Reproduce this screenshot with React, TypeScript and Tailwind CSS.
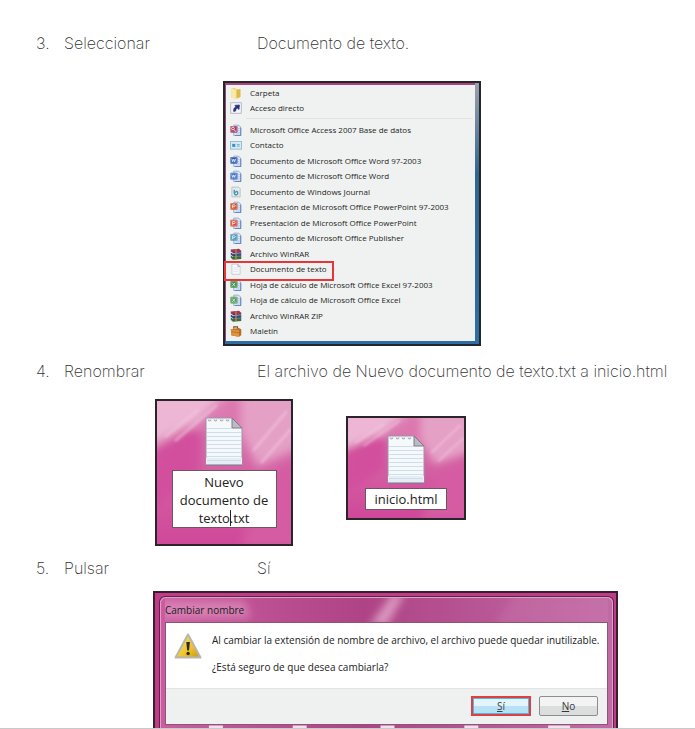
import type { ReactNode } from "react";

type IconName =
  | "folder" | "shortcut" | "access" | "contact" | "word" | "wordNew" | "journal"
  | "ppt" | "pptNew" | "publisher" | "rar" | "text" | "excel" | "excelNew" | "briefcase";

function OfficeIcon({ color, shift = 0 }: { color: string; shift?: number }) {
  return (
    <>
      <path d="M5 1.5h6.500l2.500 2.500v11.500h-9z" fill="#dbe7fa" stroke="#7f9ccf" />
      <path d="M10.500 6h2.500M10.500 8.500h2.500M10.500 11h2.500M8 13.300h5" stroke="#a9c0e6" />
      <path d="M14.500 5v10.500h-8" fill="none" stroke="#4d6fae" />
      <rect x="0.500" y={2.5 + shift} width="9.500" height="9" rx="1" fill={color} />
      <rect x="1.500" y={3.5 + shift} width="7.500" height="7" fill="none" stroke="#ffffff" strokeOpacity=".3" />
    </>
  );
}

function MenuIcon({ name }: { name: IconName }) {
  const art: Record<IconName, ReactNode> = {
    folder: (
      <>
        <path d="M2 2l5-1 1 1.500h5.500V14L8 15.500 2 14z" fill="#edd271" />
        <path d="M2 2l6 2v11.500L2 14z" fill="#f8e9a4" />
        <path d="M9 4l5-1v10l-5 2z" fill="#dfb84b" />
      </>
    ),
    shortcut: (
      <>
        <rect x="1" y="1" width="14" height="14" fill="#f3f5fa" stroke="#a3a8b5" />
        <path d="M5 12.500c-.500-4 1-5.500 3-6L6.500 4.500l6-.500-.500 6-1.800-1.700C8 8.500 7.500 10 7.500 12z" fill="#27307f" stroke="#27307f" />
      </>
    ),
    access: (
      <>
        <OfficeIcon color="#a5395c" />
        <circle cx="4" cy="6" r="1.800" fill="none" stroke="#fff" />
        <path d="M5 7.500l3 2.500" stroke="#fff" />
      </>
    ),
    contact: (
      <>
        <rect x="0.500" y="3.500" width="15" height="10" fill="#d5eaf5" stroke="#7fb0cb" />
        <rect x="3" y="6.500" width="4" height="4" fill="#3f8fb5" />
        <path d="M9 7.500h4M9 9.500h4" stroke="#5b9fc0" />
      </>
    ),
    word: (
      <>
        <OfficeIcon color="#2d58ad" />
        <path d="M2.500 5l1.200 4L5 5.500 6.300 9l1.200-4" fill="none" stroke="#fff" />
      </>
    ),
    wordNew: (
      <>
        <OfficeIcon color="#3465bd" shift={1} />
        <path d="M2.500 6l1.200 4L5 6.500 6.300 10l1.200-4" fill="none" stroke="#fff" />
      </>
    ),
    journal: (
      <>
        <path d="M2.500 1.500h9l2 2v11h-11z" fill="#e6ebed" stroke="#a9b4b9" />
        <path d="M6 5c-1 4 0 7 2 7s3-2 2-4-3 0-2 1" fill="none" stroke="#3e94b0" strokeWidth="1.800" />
      </>
    ),
    ppt: (
      <>
        <OfficeIcon color="#c9502c" />
        <path d="M3.500 9.500V5h2.200a1.300 1.300 0 010 2.700H3.500" fill="none" stroke="#fff" />
      </>
    ),
    pptNew: (
      <>
        <OfficeIcon color="#d44a38" shift={1} />
        <path d="M3.500 10.500V6h2.200a1.300 1.300 0 010 2.700H3.500" fill="none" stroke="#fff" />
      </>
    ),
    publisher: (
      <>
        <OfficeIcon color="#4c93b0" />
        <path d="M3.500 9.500V5h2.200a1.300 1.300 0 010 2.700H3.500" fill="none" stroke="#fff" />
      </>
    ),
    rar: (
      <>
        <path d="M1 2l11-1 3 2.500v2L4 6.500 1 4.500z" fill="#a0335c" />
        <path d="M1 6l3 2 11-1v3L4 11 1 9z" fill="#2c4c97" />
        <path d="M1 10l3 2 11-1v3.500L4 15.500 1 13z" fill="#35703c" />
        <path d="M4 6.500h11M4 11l11-.500" stroke="#1e1f30" />
        <path d="M8 1.500v13.500" stroke="#b58b45" strokeWidth="1.800" />
      </>
    ),
    text: (
      <>
        <path d="M2.500 1.500h8l3 3v10.500h-11z" fill="#f8fafc" stroke="#bbc1c7" />
        <path d="M10.500 1.500v3h3" fill="none" stroke="#9ba4ac" />
        <path d="M4.500 6.500h7M4.500 9h7M4.500 11.500h7" stroke="#d9e1e9" />
      </>
    ),
    excel: (
      <>
        <OfficeIcon color="#3f8b45" />
        <path d="M3 5l4 4.500M7 5L3 9.500" stroke="#fff" />
      </>
    ),
    excelNew: (
      <>
        <OfficeIcon color="#4b9a4e" shift={1} />
        <path d="M3 6l4 4.500M7 6l-4 4.500" stroke="#fff" />
      </>
    ),
    briefcase: (
      <>
        <path d="M5 5V2.500h5V5" fill="none" stroke="#7d4c1d" strokeWidth="1.500" />
        <path d="M1 5.500l11-1.500 3 1.500v8L12 15.500 2 14z" fill="#b96f26" />
        <path d="M1 5.500l11 1.500v8.500L2 14z" fill="#dc9440" />
        <path d="M1.500 9l10.500 1.200 3-1.200" fill="none" stroke="#b06a24" />
      </>
    ),
  };
  return (
    <svg viewBox="0 0 16 16" className="size-3 shrink-0" aria-hidden="true">
      {art[name]}
    </svg>
  );
}

const topItems: [IconName, string][] = [
  ["folder", "Carpeta"],
  ["shortcut", "Acceso directo"],
];

const items: [IconName, string][] = [
  ["access", "Microsoft Office Access 2007 Base de datos"],
  ["contact", "Contacto"],
  ["word", "Documento de Microsoft Office Word 97-2003"],
  ["wordNew", "Documento de Microsoft Office Word"],
  ["journal", "Documento de Windows Journal"],
  ["ppt", "Presentación de Microsoft Office PowerPoint 97-2003"],
  ["pptNew", "Presentación de Microsoft Office PowerPoint"],
  ["publisher", "Documento de Microsoft Office Publisher"],
  ["rar", "Archivo WinRAR"],
  ["text", "Documento de texto"],
  ["excel", "Hoja de cálculo de Microsoft Office Excel 97-2003"],
  ["excelNew", "Hoja de cálculo de Microsoft Office Excel"],
  ["rar", "Archivo WinRAR ZIP"],
  ["briefcase", "Maletín"],
];

function MenuRow({ icon, label }: { icon: IconName; label: string }) {
  return (
    <li className="relative min-h-0">
      <button type="button" className="flex h-full w-full items-center gap-2 pl-0.5 text-left whitespace-nowrap">
        <MenuIcon name={icon} />
        {label}
      </button>
      {icon === "text" && (
        <span className="pointer-events-none absolute -top-px -left-1 z-10 h-5 w-[110px] border-2 border-[#e8353a]" />
      )}
    </li>
  );
}

function ContextMenu() {
  return (
    <div className="ml-[223px] w-[258px] border-2 border-[#252629] bg-linear-to-b from-[#9aa0ad] via-[#2f6690] via-35% to-[#2d6fa5] pr-1 pb-[3px]">
      <div className="border-t-2 border-l border-t-[#a8447f] border-l-[#8d4a78] bg-[#f0f2f2] pb-0.5 font-['Open_Sans',sans-serif] text-[8px] leading-3 text-[#1c1e20]">
        <ul className="grid h-[31px] auto-rows-fr pl-0.5">
          {topItems.map(([icon, label]) => (
            <MenuRow key={label} icon={icon} label={label} />
          ))}
        </ul>
        <hr className="mt-0.5 mr-0.5 mb-[3px] ml-5 border-[#e0e3e3]" />
        <ul className="grid h-[217px] auto-rows-fr pl-0.5">
          {items.map(([icon, label]) => (
            <MenuRow key={label} icon={icon} label={label} />
          ))}
        </ul>
      </div>
    </div>
  );
}

function NotepadIcon() {
  return (
    <svg viewBox="0 0 38 50" className="h-[50px] w-[38px]" aria-hidden="true">
      <path d="M1 2h26l10 10v37H1z" fill="#f5f9fc" stroke="#9a95a5" />
      <path d="M1 42h36v7H1z" fill="#e6edf4" />
      <path
        d="M2 12.500h25M2 16.500h34M2 20.500h34M2 24.500h34M2 28.500h34M2 32.500h34M2 36.500h34M2 40.500h34M2 44.500h34"
        stroke="#cfdfea"
      />
      <path d="M27 2v10h10z" fill="#b9bcc4" stroke="#7e7b89" />
      <path d="M3 3.500a1.500 1.500 0 103 0M9 3.500a1.500 1.500 0 103 0M15 3.500a1.500 1.500 0 103 0M21 3.500a1.500 1.500 0 103 0" fill="#d6d2dc" stroke="#9a95a5" strokeWidth=".8" />
      <path d="M1 49h36" stroke="#77708a" />
    </svg>
  );
}

function DesktopTile({ className, children }: { className: string; children: ReactNode }) {
  return (
    <div className={"relative isolate flex flex-col items-center overflow-hidden border-2 border-[#2b242a] " + className}>
      <svg viewBox="0 0 134 143" preserveAspectRatio="none" className="absolute inset-0 -z-10 size-full" aria-hidden="true">
        <defs>
          <linearGradient id="petal" x1="0" y1="0" x2="0" y2="1">
            <stop offset="0" stopColor="#dd80b4" />
            <stop offset=".5" stopColor="#d461a3" />
            <stop offset="1" stopColor="#d0489a" />
          </linearGradient>
          <filter id="soft" x="-30%" y="-30%" width="160%" height="160%">
            <feGaussianBlur stdDeviation="5" />
          </filter>
          <filter id="streak" x="-30%" y="-30%" width="160%" height="160%">
            <feGaussianBlur stdDeviation="1.2" />
          </filter>
        </defs>
        <rect width="134" height="143" fill="url(#petal)" />
        <g filter="url(#soft)">
          <path d="M-10 -10h80L40 22-10 46z" fill="#ecb6d4" />
          <path d="M84 -10h60v56L100 66 84 30z" fill="#e5a0c6" />
          <path d="M72 0h12l-2 40-10-10z" fill="#dc74ae" />
          <path d="M-5 52l35-26 16 8-4 40L-5 110z" fill="#d2509d" />
          <path d="M140 56l-36 30-20 60h60z" fill="#d55ca3" />
        </g>
        <path
          d="M8 36L42 8M18 40L60 4M96 50l34-40M104 62l30-34"
          stroke="#f4cbe0"
          strokeOpacity=".45"
          strokeWidth="3"
          filter="url(#streak)"
        />
      </svg>
      {children}
    </div>
  );
}

function RenameDialog() {
  return (
    <div className="relative isolate ml-[153px] w-[465px] overflow-hidden border-2 border-b-0 border-[#36202f] bg-[#c03c89] pt-[3px] pr-0.5 pl-1">
      <section
        aria-label="Cambiar nombre"
        className="rounded-t-md border border-b-0 border-[#5e2549] bg-linear-to-r from-[#cc5ca0] via-[#ae4385] via-45% to-[#c36aa6] font-['Open_Sans',sans-serif] text-[10px] text-[#222]"
      >
        <div className="rounded-t-md border border-b-0 border-[#dda0c7] px-1">
          <header className="relative flex h-6 items-center overflow-hidden">
            <svg viewBox="0 0 444 24" preserveAspectRatio="none" className="absolute inset-0 size-full" aria-hidden="true">
              <defs>
                <filter id="glass" x="-10%" y="-50%" width="120%" height="200%">
                  <feGaussianBlur stdDeviation="4" />
                </filter>
              </defs>
              <g filter="url(#glass)">
                <path d="M205 28L228 -4h12L222 28z" fill="#e9b4d4" fillOpacity=".75" />
                <path d="M-6 3h86L86 20H-6z" fill="#e29cc5" fillOpacity=".6" />
                <path d="M330 28L350 -4h100v32z" fill="#cf83b4" fillOpacity=".25" />
              </g>
            </svg>
            <h2 className="relative">Cambiar nombre</h2>
          </header>
          <div className="border border-[#89567a]">
            <div className="flex h-[65px] gap-[10px] bg-white pt-2.5 pl-2">
              <svg viewBox="0 0 28 26" className="h-[26px] w-7 shrink-0" aria-hidden="true">
                <defs>
                  <linearGradient id="warn" x1="0" y1="0" x2="1" y2="1">
                    <stop offset="0" stopColor="#fae66a" />
                    <stop offset=".6" stopColor="#efc429" />
                    <stop offset="1" stopColor="#c79612" />
                  </linearGradient>
                </defs>
                <path d="M14 1.500L26.500 24.500h-25z" fill="url(#warn)" stroke="#b7b6b0" strokeWidth="2" strokeLinejoin="round" />
                <path d="M12.300 9h3.600l-.9 8.500h-1.800z" fill="#2b2a25" />
                <circle cx="14.100" cy="20.500" r="1.700" fill="#2b2a25" />
              </svg>
              <div className="flex flex-col gap-3 whitespace-nowrap">
                <p>Al cambiar la extensión de nombre de archivo, el archivo puede quedar inutilizable.</p>
                <p>¿Está seguro de que desea cambiarla?</p>
              </div>
            </div>
            <div className="flex h-9 items-start justify-end gap-2 border-t border-[#e1e4e4] bg-[#eff1f1] pt-[7px] pr-[9px]">
              <button
                type="button"
                className="flex h-5 w-[60px] items-center justify-center border-2 border-[#df3f42] bg-linear-to-b from-[#e4f4fc] from-50% to-[#b9e1f5] to-50% text-[#3b4248] ring-1 ring-[#54b7dd] ring-inset"
              >
                <span className="underline">S</span>í
              </button>
              <button
                type="button"
                className="flex h-5 w-[59px] items-center justify-center rounded-xs border border-[#8b8d90] bg-linear-to-b from-[#f3f3f3] from-50% to-[#dcdddd] to-50% text-[#33363a]"
              >
                <span className="underline">N</span>o
              </button>
            </div>
          </div>
          <svg viewBox="0 0 444 3" preserveAspectRatio="none" className="block h-[3px] w-full" aria-hidden="true">
            <path d="M44 2h14M128 2h14M216 2h14M300 2h14M384 2h22" stroke="#f6dfec" strokeWidth="3" />
          </svg>
        </div>
      </section>
    </div>
  );
}

function Step({ n, action, children }: { n: number; action: string; children: ReactNode }) {
  return (
    <div className="grid grid-cols-[28px_193px_1fr] pl-9 font-['Inter',sans-serif] text-base leading-6 font-extralight whitespace-nowrap text-[#333]">
      <span>{n}.</span>
      <span>{action}</span>
      <span>{children}</span>
    </div>
  );
}

export default function App() {
  return (
    <main className="border-b border-[#c9c9c9] bg-white pt-[31px]">
      <Step n={3} action="Seleccionar">Documento de texto.</Step>
      <div className="pt-[26px] pb-[13px]">
        <ContextMenu />
      </div>
      <Step n={4} action="Renombrar">El archivo de Nuevo documento de texto.txt a inicio.html</Step>
      <div className="flex items-start gap-[53px] pt-4 pb-[10px] pl-[155px] font-['Open_Sans',sans-serif] text-[13px] text-[#222]">
        <DesktopTile className="h-[147px] w-[138px] pt-[15px]">
          <NotepadIcon />
          <div className="relative mt-1">
            <textarea
              aria-label="Nombre del archivo"
              rows={3}
              defaultValue={"Nuevo\ndocumento de\ntexto.txt"}
              className="block h-[58px] w-[105px] resize-none overflow-hidden border border-[#6d5567] bg-white pt-0.5 text-center leading-[18px]"
            />
            <span className="absolute bottom-0.5 left-[58px] h-4 w-px bg-[#222]" />
          </div>
        </DesktopTile>
        <DesktopTile className="mt-[17px] h-[104px] w-[120px] pt-4">
          <NotepadIcon />
          <input
            aria-label="Nombre nuevo"
            defaultValue="inicio.html"
            className="mt-1 block h-[22px] w-[82px] border border-[#6d5567] bg-white text-center"
          />
        </DesktopTile>
      </div>
      <Step n={5} action="Pulsar">Sí</Step>
      <div className="pt-[11px]">
        <RenameDialog />
      </div>
    </main>
  );
}
